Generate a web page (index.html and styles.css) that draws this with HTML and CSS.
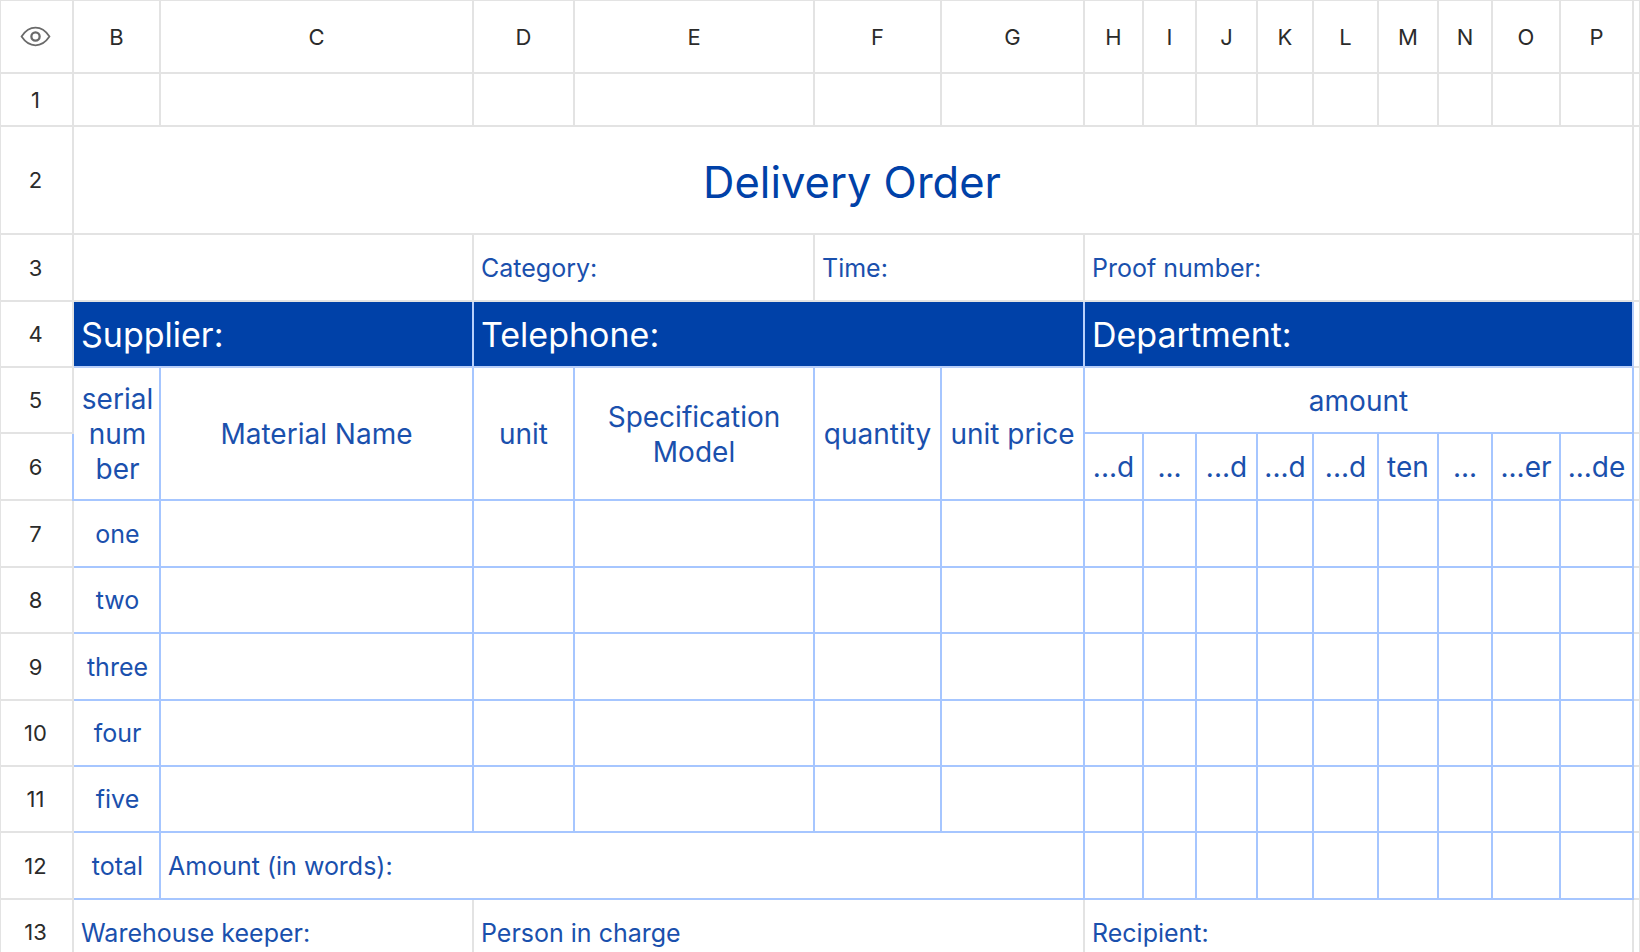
FILE: index.html
```html
<!DOCTYPE html>
<html lang="en">
<head>
    <meta charset="UTF-8">
    <meta name="viewport" content="width=device-width, initial-scale=1.0">
    <title>Delivery Order</title>
    <link rel="stylesheet" href="styles.css">
</head>
<body>
<table class="sheet">
    <colgroup>
        <col class="col-a"><col class="col-b"><col class="col-c"><col class="col-d"><col class="col-e">
        <col class="col-f"><col class="col-g"><col class="col-h"><col class="col-i"><col class="col-j">
        <col class="col-k"><col class="col-l"><col class="col-m"><col class="col-n"><col class="col-o">
        <col class="col-p"><col class="col-q">
    </colgroup>
    <tr class="row-head">
        <td class="head num">
            <svg class="eye" width="31" height="21" viewBox="0 0 30 20" fill="none" stroke="#6a6a6a" stroke-width="1.7">
                <path d="M1.500 10C5.300 4.300 9.800 1.500 15 1.500S24.700 4.300 28.500 10C24.700 15.700 20.200 18.500 15 18.500S5.300 15.700 1.500 10z"/>
                <circle cx="15" cy="10" r="4" stroke-width="2.200"/>
            </svg>
        </td>
        <td class="head">B</td><td class="head">C</td><td class="head">D</td><td class="head">E</td>
        <td class="head">F</td><td class="head">G</td><td class="head">H</td><td class="head">I</td>
        <td class="head">J</td><td class="head">K</td><td class="head">L</td><td class="head">M</td>
        <td class="head">N</td><td class="head">O</td><td class="head">P</td><td></td>
    </tr>
    <tr class="row-1">
        <td class="head num">1</td>
        <td></td><td></td><td></td><td></td><td></td><td></td><td></td><td></td>
        <td></td><td></td><td></td><td></td><td></td><td></td><td></td><td></td>
    </tr>
    <tr class="row-2">
        <td class="head num">2</td>
        <td colspan="15" class="title">Delivery Order</td>
        <td></td>
    </tr>
    <tr class="row-3">
        <td class="head num">3</td>
        <td colspan="2"></td>
        <td colspan="2" class="label">Category:</td>
        <td colspan="2" class="label">Time:</td>
        <td colspan="9" class="label">Proof number:</td>
        <td></td>
    </tr>
    <tr class="row-4">
        <td class="head num">4</td>
        <td colspan="2" class="band">Supplier:</td>
        <td colspan="4" class="band">Telephone:</td>
        <td colspan="9" class="band">Department:</td>
        <td></td>
    </tr>
    <tr class="row-5">
        <td class="head num">5</td>
        <td rowspan="2" class="cell big serial">serial<br>num<br>ber</td>
        <td rowspan="2" class="cell big">Material Name</td>
        <td rowspan="2" class="cell big">unit</td>
        <td rowspan="2" class="cell big">Specification<br>Model</td>
        <td rowspan="2" class="cell big">quantity</td>
        <td rowspan="2" class="cell big">unit price</td>
        <td colspan="9" class="cell big">amount</td>
        <td></td>
    </tr>
    <tr class="row-6">
        <td class="head num">6</td>
        <td class="cell big">...d</td><td class="cell big">...</td><td class="cell big">...d</td>
        <td class="cell big">...d</td><td class="cell big">...d</td><td class="cell big">ten</td>
        <td class="cell big">...</td><td class="cell big">...er</td><td class="cell big">...de</td>
        <td></td>
    </tr>
    <tr class="row-7">
        <td class="head num">7</td>
        <td class="cell serial">one</td>
        <td class="cell"></td><td class="cell"></td><td class="cell"></td><td class="cell"></td><td class="cell"></td>
        <td class="cell"></td><td class="cell"></td><td class="cell"></td><td class="cell"></td><td class="cell"></td>
        <td class="cell"></td><td class="cell"></td><td class="cell"></td><td class="cell"></td>
        <td></td>
    </tr>
    <tr class="row-8">
        <td class="head num">8</td>
        <td class="cell serial">two</td>
        <td class="cell"></td><td class="cell"></td><td class="cell"></td><td class="cell"></td><td class="cell"></td>
        <td class="cell"></td><td class="cell"></td><td class="cell"></td><td class="cell"></td><td class="cell"></td>
        <td class="cell"></td><td class="cell"></td><td class="cell"></td><td class="cell"></td>
        <td></td>
    </tr>
    <tr class="row-9">
        <td class="head num">9</td>
        <td class="cell serial">three</td>
        <td class="cell"></td><td class="cell"></td><td class="cell"></td><td class="cell"></td><td class="cell"></td>
        <td class="cell"></td><td class="cell"></td><td class="cell"></td><td class="cell"></td><td class="cell"></td>
        <td class="cell"></td><td class="cell"></td><td class="cell"></td><td class="cell"></td>
        <td></td>
    </tr>
    <tr class="row-10">
        <td class="head num">10</td>
        <td class="cell serial">four</td>
        <td class="cell"></td><td class="cell"></td><td class="cell"></td><td class="cell"></td><td class="cell"></td>
        <td class="cell"></td><td class="cell"></td><td class="cell"></td><td class="cell"></td><td class="cell"></td>
        <td class="cell"></td><td class="cell"></td><td class="cell"></td><td class="cell"></td>
        <td></td>
    </tr>
    <tr class="row-11">
        <td class="head num">11</td>
        <td class="cell serial">five</td>
        <td class="cell"></td><td class="cell"></td><td class="cell"></td><td class="cell"></td><td class="cell"></td>
        <td class="cell"></td><td class="cell"></td><td class="cell"></td><td class="cell"></td><td class="cell"></td>
        <td class="cell"></td><td class="cell"></td><td class="cell"></td><td class="cell"></td>
        <td></td>
    </tr>
    <tr class="row-12">
        <td class="head num">12</td>
        <td class="cell serial">total</td>
        <td colspan="5" class="cell label">Amount (in words):</td>
        <td class="cell"></td><td class="cell"></td><td class="cell"></td><td class="cell"></td><td class="cell"></td>
        <td class="cell"></td><td class="cell"></td><td class="cell"></td><td class="cell"></td>
        <td></td>
    </tr>
    <tr class="row-13">
        <td class="head num">13</td>
        <td colspan="2" class="label">Warehouse keeper:</td>
        <td colspan="4" class="label">Person in charge</td>
        <td colspan="9" class="label">Recipient:</td>
        <td></td>
    </tr>
</table>
</body>
</html>
```

FILE: styles.css
```css
html, body {
    margin: 0;
    padding: 0;
    height: 100%;
    overflow: hidden;
    background-color: #fff;
}
.sheet {
    width: 1640px;
    margin: -1px 0 0 -1px;
    table-layout: fixed;
    border-collapse: collapse;
    font-family: Inter, "Noto Sans", sans-serif;
    font-size: 25px;
    color: #1a50ad;
}
.sheet td {
    padding: 0;
    border: 2px solid #e3e3e3;
    text-align: center;
    vertical-align: middle;
    overflow: hidden;
    white-space: nowrap;
}
.col-a { width: 73px; }
.col-b { width: 87px; }
.col-c { width: 313px; }
.col-d { width: 101px; }
.col-e { width: 240px; }
.col-f { width: 127px; }
.col-g { width: 143px; }
.col-h { width: 59px; }
.col-i { width: 53px; }
.col-j { width: 61px; }
.col-k { width: 56px; }
.col-l { width: 65px; }
.col-m { width: 60px; }
.col-n { width: 54px; }
.col-o { width: 68px; }
.col-p { width: 73px; }
.col-q { width: 7px; }
.row-head { height: 73px; }
.row-1 { height: 53px; }
.row-2 { height: 108px; }
.row-3 { height: 67px; }
.row-4 { height: 66px; }
.row-5 { height: 66px; }
.row-6 { height: 67px; }
.row-7 { height: 67px; }
.row-8 { height: 66px; }
.row-9 { height: 67px; }
.row-10 { height: 66px; }
.row-11 { height: 66px; }
.row-12 { height: 67px; }
.row-13 { height: 66px; }
.sheet td.head {
    font-size: 22px;
    color: #2b2b2b;
}
.sheet td.num {
    padding-right: 2px;
}
.eye {
    display: block;
    margin: 0 auto;
}
.sheet td.title {
    padding: 3px 2px 0 0;
    font-size: 43.500px;
    color: #0041a8;
}
.sheet td.label {
    padding-left: 7px;
    text-align: left;
}
.row-13 td.label {
    padding-top: 2px;
}
.sheet td.band {
    padding-left: 7px;
    font-size: 34px;
    text-align: left;
    color: #fff;
    background-color: #0041a8;
    border-color: #b8cffa;
}
.sheet td.cell {
    border-color: #a6c6ff;
}
.sheet td.big {
    padding-top: 2px;
    font-size: 28px;
    line-height: 35px;
}
.sheet td.serial {
    padding-left: 2px;
}
```
